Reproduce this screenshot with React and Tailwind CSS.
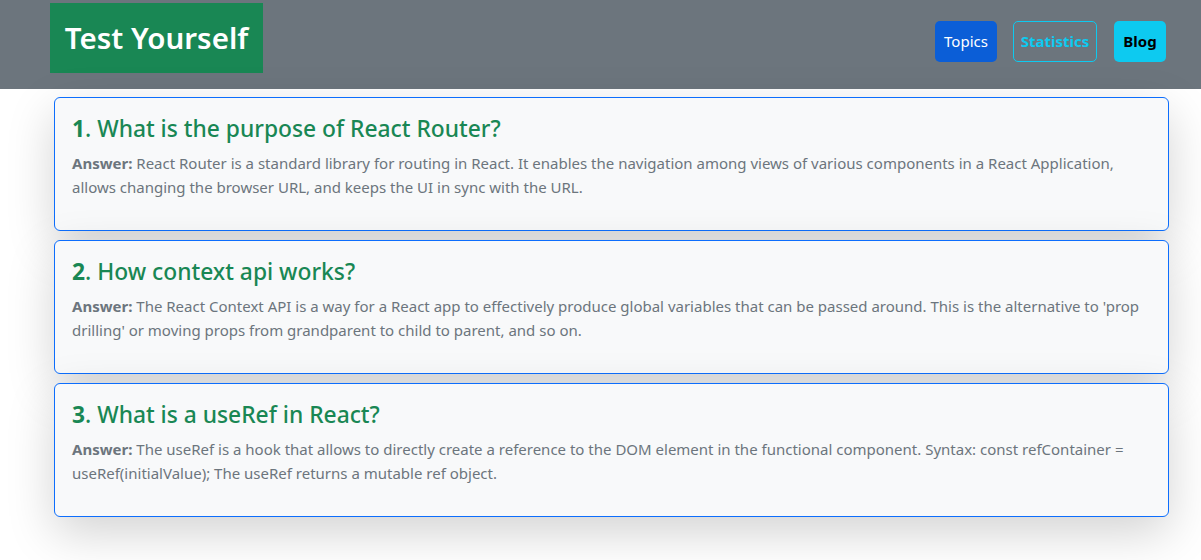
import React from "react";

const qa = [
  {
    n: "1",
    q: ". What is the purpose of React Router?",
    a: "React Router is a standard library for routing in React. It enables the navigation among views of various components in a React Application, allows changing the browser URL, and keeps the UI in sync with the URL.",
  },
  {
    n: "2",
    q: ". How context api works?",
    a: "The React Context API is a way for a React app to effectively produce global variables that can be passed around. This is the alternative to 'prop drilling' or moving props from grandparent to child to parent, and so on.",
  },
  {
    n: "3",
    q: ". What is a useRef in React?",
    a: "The useRef is a hook that allows to directly create a reference to the DOM element in the functional component. Syntax: const refContainer = useRef(initialValue); The useRef returns a mutable ref object.",
  },
];

export default function App() {
  return (
    <div className="min-h-[560px] bg-white font-['Noto_Sans',sans-serif]">
      <nav className="flex h-[89px] items-start justify-between bg-[#6c757d]">
        <div className="ml-[50px] mt-[3px] flex h-[70px] w-[213px] items-center justify-center bg-[#198754]">
          <span className="text-[29.5px] font-semibold leading-none text-white">Test Yourself</span>
        </div>
        <div className="mr-[35px] mt-[21px] flex items-center">
          <button className="h-[41px] w-[62px] rounded-[5px] bg-[#0b5ed7] text-center text-[15px] text-white">Topics</button>
          <button className="ml-[16px] h-[41px] w-[84px] rounded-[5px] border border-[#0dcaf0] text-center text-[15px] font-bold text-[#0dcaf0]">Statistics</button>
          <button className="ml-[17px] h-[41px] w-[52px] rounded-[5px] bg-[#0dcaf0] text-center text-[15px] font-bold text-black">Blog</button>
        </div>
      </nav>
      <div className="ml-[54px] mt-[8px] flex w-[1115px] flex-col gap-[9px]">
        {qa.map((item) => (
          <div
            key={item.n}
            className="rounded-[6px] border border-[#0d6efd] bg-[#f8f9fa] px-[17px] pb-[15px] pt-[16px] shadow-[0_1rem_3rem_rgba(0,0,0,0.175)]"
          >
            <h3 className="mb-[8px] text-[22.8px] font-medium leading-[29px] text-[#198754]">
              <span className="font-bold">{item.n}</span>
              {item.q}
            </h3>
            <p className="mb-[16px] text-[15px] leading-[24px] text-[#6c757d]">
              <span className="font-bold">Answer:</span> {item.a}
            </p>
          </div>
        ))}
      </div>
    </div>
  );
}
